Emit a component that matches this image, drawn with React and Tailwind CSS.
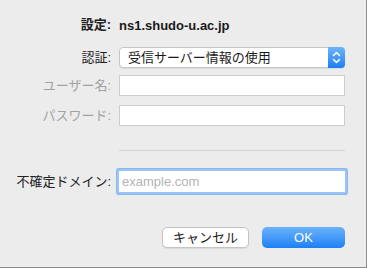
const Field = ({ placeholder }) => (
	<div className="flex h-[21px] w-[226px] items-center border border-[#cdcdcd] bg-white px-[3px] text-[13px]">
		{placeholder && <span className="text-[#b4b4b4]">{placeholder}</span>}
	</div>
)

const Row = ({ label, dim, className, children }) => (
	<div className={`flex items-center ${className || ''}`}>
		<div className={`w-[111px] text-right text-[13px] ${dim ? 'text-[#a1a1a1]' : 'text-[#222]'}`}>{label}</div>
		<div className="ml-[8px]">{children}</div>
	</div>
)

const App = () => {
	return (
		<div
			className="flex h-[268px] w-[367px] flex-col border-r border-b border-[#8c8c8c] bg-[#ececec]"
			style={{ fontFamily: '"Liberation Sans", "Noto Sans CJK JP", sans-serif' }}
		>
			<Row label="設定:" className="mt-[16px] h-[18px] font-bold">
				<span className="text-[13px] font-bold text-[#1a1a1a]">ns1.shudo-u.ac.jp</span>
			</Row>
			<Row label="認証:" className="mt-[13px]">
				<div className="flex h-[21px] w-[226px] items-stretch rounded-[4px] border border-[#c6c6c6] bg-white shadow-[0_1px_1px_rgba(0,0,0,0.08)]">
					<div className="flex flex-1 items-center pl-[8px] text-[13px] text-[#1a1a1a]">受信サーバー情報の使用</div>
					<div className="-my-px -mr-px flex w-[17px] items-center justify-center rounded-r-[4px] bg-gradient-to-b from-[#6cb4fb] to-[#187ef5]">
						<svg width="9" height="13" viewBox="0 0 9 13" fill="none" stroke="white" strokeWidth="1.5" strokeLinecap="round" strokeLinejoin="round">
							<path d="M1.5 4.5 L4.5 1.5 L7.5 4.5" />
							<path d="M1.5 8.5 L4.5 11.5 L7.5 8.5" />
						</svg>
					</div>
				</div>
			</Row>
			<Row label="ユーザー名:" dim className="mt-[7px]">
				<Field />
			</Row>
			<Row label="パスワード:" dim className="mt-[9px]">
				<Field />
			</Row>
			<div className="mt-[24px] ml-[119px] h-px w-[226px] bg-[#d3d3d3]" />
			<Row label="不確定ドメイン:" className="mt-[20px] h-[21px]">
				<div className="flex h-[21px] w-[226px] items-center rounded-[1px] bg-white px-[3px] text-[13px] shadow-[0_0_0_2px_#9ac5f4,0_0_0_3px_#86b7ef]">
					<span className="text-[#b4b4b4]">example.com</span>
				</div>
			</Row>
			<div className="mt-[35px] flex justify-end gap-[13px] pr-[21px]">
				<button className="flex h-[21px] w-[87px] items-center justify-center rounded-[5px] border border-[#c4c4c4] bg-white text-[13px] text-[#1a1a1a] shadow-[0_1px_1px_rgba(0,0,0,0.08)]">
					キャンセル
				</button>
				<button className="flex h-[21px] w-[83px] items-center justify-center rounded-[5px] bg-gradient-to-b from-[#6ab3fb] to-[#1a7ff5] text-[13px] text-white">
					OK
				</button>
			</div>
		</div>
	)
}

export default App
